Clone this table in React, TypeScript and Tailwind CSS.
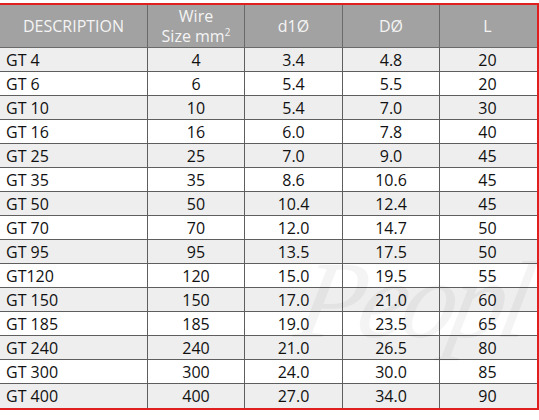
const rows = [
  ["GT 4", "4", "3.4", "4.8", "20"],
  ["GT 6", "6", "5.4", "5.5", "20"],
  ["GT 10", "10", "5.4", "7.0", "30"],
  ["GT 16", "16", "6.0", "7.8", "40"],
  ["GT 25", "25", "7.0", "9.0", "45"],
  ["GT 35", "35", "8.6", "10.6", "45"],
  ["GT 50", "50", "10.4", "12.4", "45"],
  ["GT 70", "70", "12.0", "14.7", "50"],
  ["GT 95", "95", "13.5", "17.5", "50"],
  ["GT120", "120", "15.0", "19.5", "55"],
  ["GT 150", "150", "17.0", "21.0", "60"],
  ["GT 185", "185", "19.0", "23.5", "65"],
  ["GT 240", "240", "21.0", "26.5", "80"],
  ["GT 300", "300", "24.0", "30.0", "85"],
  ["GT 400", "400", "27.0", "34.0", "90"],
]

export default function App() {
  return (
    <div className="w-[539px] h-[420px] bg-white pt-[3px]" style={{ fontFamily: '"Open Sans", sans-serif' }}>
      <div className="relative w-[539px] border-t-2 border-r-2 border-b-2 border-[#e0201f] overflow-hidden">
        {/* header */}
        <div className="grid grid-cols-[148px_97px_98px_97px_95px] h-[43px] bg-[#a2a2a2] text-[#f4f4f4] text-[16px] border-b border-[#6a6a6a]">
          <div className="flex items-center justify-center border-r border-[#6a6a6a]">DESCRIPTION</div>
          <div className="flex flex-col items-center justify-center leading-[20px] border-r border-[#6a6a6a]">
            <span>Wire</span>
            <span className="flex items-start">
              Size mm<span className="text-[10px] leading-[12px]">2</span>
            </span>
          </div>
          <div className="flex items-center justify-center border-r border-[#6a6a6a]">d1Ø</div>
          <div className="flex items-center justify-center border-r border-[#6a6a6a]">DØ</div>
          <div className="flex items-center justify-center">L</div>
        </div>

        {rows.map((r, i) => (
          <div
            key={r[0]}
            className={`grid grid-cols-[148px_97px_98px_97px_95px] h-[24px] text-[16px] text-[#111] ${
              i % 2 === 0 ? "bg-[#eeeeee]" : "bg-white"
            } ${i < rows.length - 1 ? "border-b border-[#5e5e5e]" : ""}`}
          >
            <div className="flex items-center pl-[6px] border-r border-[#5e5e5e]">{r[0]}</div>
            <div className="flex items-center justify-center border-r border-[#5e5e5e]">{r[1]}</div>
            <div className="flex items-center justify-center border-r border-[#5e5e5e]">{r[2]}</div>
            <div className="flex items-center justify-center border-r border-[#5e5e5e]">{r[3]}</div>
            <div className="flex items-center justify-center">{r[4]}</div>
          </div>
        ))}

        {/* watermark */}
        <div
          className="absolute left-[300px] top-[240px] text-[110px] italic leading-none tracking-[-6px] text-black/[0.045] pointer-events-none select-none -skew-x-12"
          style={{ fontFamily: '"Liberation Serif", serif' }}
        >
          Peopl
        </div>
      </div>
    </div>
  )
}
